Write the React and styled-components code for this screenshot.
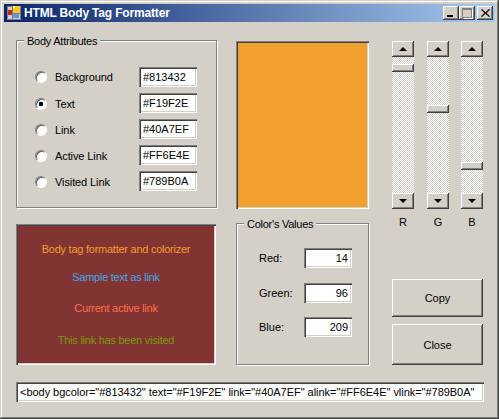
import React from "react";
import styled, { createGlobalStyle, css } from "styled-components";

const attributes = [
  { label: "Background", value: "#813432" },
  { label: "Text", value: "#F19F2E", checked: true },
  { label: "Link", value: "#40A7EF" },
  { label: "Active Link", value: "#FF6E4E" },
  { label: "Visited Link", value: "#789B0A" },
];

const previewLines = [
  { text: "Body tag formatter and colorizer", color: "#f19f2e", top: 0 },
  { text: "Sample text as link", color: "#40a7ef", top: 14 },
  { text: "Current active link", color: "#ff6e4e", top: 17 },
  { text: "This link has been visited", color: "#789b0a", top: 18 },
];

const channels = [
  { name: "R", label: "Red:", value: 14 },
  { name: "G", label: "Green:", value: 96 },
  { name: "B", label: "Blue:", value: 209 },
];

const bodyTag =
  '<body bgcolor="#813432" text="#F19F2E" link="#40A7EF" alink="#FF6E4E" vlink="#789B0A"';

export default function App() {
  return (
    <>
      <GlobalStyle />
      <Window>
        <TitleBar>
          <AppIcon />
          <Title>HTML Body Tag Formatter</Title>
          <Controls>
            <ControlButton>
              <svg width="8" height="8" viewBox="0 0 8 8">
                <rect x="0" y="6" width="6" height="2" fill="#000" />
              </svg>
            </ControlButton>
            <ControlButton>
              <svg width="11" height="11" viewBox="0 0 11 11" fill="none">
                <rect x="0.5" y="0.5" width="9" height="9" stroke="#808080" />
                <rect x="1" y="1" width="8" height="1" fill="#808080" />
                <path d="M10.5 1.5V10.5H1.5" stroke="#fff" />
              </svg>
            </ControlButton>
            <CloseButton>
              <svg width="9" height="8" viewBox="0 0 9 8">
                <path d="M1 0L4.5 3.2L8 0L9 0.8L5.5 4L9 7.2L8 8L4.5 4.8L1 8L0 7.2L3.5 4L0 0.8Z" fill="#000" />
              </svg>
            </CloseButton>
          </Controls>
        </TitleBar>

        <Content>
          <Panels>
            <AttributesGroup>
              <GroupLabel>Body Attributes</GroupLabel>
              {attributes.map((item) => (
                <AttributeRow key={item.label}>
                  <Radio type="radio" name="attr" defaultChecked={item.checked} />
                  <span>{item.label}</span>
                  <Field readOnly value={item.value} />
                </AttributeRow>
              ))}
            </AttributesGroup>

            <Swatch />

            <RightColumn>
              <Sliders>
                {channels.map((c) => (
                  <Slider key={c.name}>
                    <ScrollBar>
                      <ArrowButton>
                        <Arrow />
                      </ArrowButton>
                      <Track>
                        <TrackTexture id={`checker-${c.name}`} />
                        <Thumb style={{ top: Math.round((c.value / 255) * 128) }} />
                      </Track>
                      <ArrowButton>
                        <Arrow $down />
                      </ArrowButton>
                    </ScrollBar>
                    <SliderName>{c.name}</SliderName>
                  </Slider>
                ))}
              </Sliders>
              <Actions>
                <ActionButton $height={38}>Copy</ActionButton>
                <ActionButton $height={41}>Close</ActionButton>
              </Actions>
            </RightColumn>

            <Preview>
              {previewLines.map((line) => (
                <PreviewLine key={line.text} $color={line.color} $top={line.top}>
                  {line.text}
                </PreviewLine>
              ))}
            </Preview>

            <ValuesGroup>
              <GroupLabel>Color's Values</GroupLabel>
              {channels.map((c) => (
                <ValueRow key={c.name}>
                  <span>{c.label}</span>
                  <ValueField readOnly value={c.value} />
                </ValueRow>
              ))}
            </ValuesGroup>
          </Panels>

          <TagField readOnly value={bodyTag} />
        </Content>
      </Window>
    </>
  );
}

function AppIcon() {
  return (
    <IconSvg width="16" height="16" viewBox="0 0 16 16">
      <rect x="1" y="1" width="14" height="14" fill="#d4d0c8" />
      <path d="M1.5 1.5H14.5V14.5H1.5Z M6.5 1.5V14.5 M1.5 5.5H6.5 M6.5 8.5H14.5" fill="none" stroke="#7f7f7f" />
      <rect x="7" y="1" width="7" height="7" fill="#f8c81c" />
      <rect x="7" y="1" width="2" height="2" fill="#fff09a" />
      <rect x="2" y="5" width="4" height="5" fill="#c8281c" />
      <rect x="7" y="9" width="6" height="4" fill="#5c96e8" />
    </IconSvg>
  );
}

// 1px checker of the classic scrollbar track
function TrackTexture({ id }) {
  return (
    <TextureSvg width="22" height="136" shapeRendering="crispEdges">
      <defs>
        <pattern id={id} width="2" height="2" patternUnits="userSpaceOnUse">
          <rect width="2" height="2" fill="#fff" />
          <rect width="1" height="1" fill="#d4d0c8" />
          <rect x="1" y="1" width="1" height="1" fill="#d4d0c8" />
        </pattern>
      </defs>
      <rect width="22" height="136" fill={`url(#${id})`} />
    </TextureSvg>
  );
}

const GlobalStyle = createGlobalStyle`
  html, body {
    margin: 0;
    padding: 0;
    background: #d4d0c8;
  }
  body, input, button {
    font-family: "Liberation Sans", Arial, sans-serif;
    font-size: 11px;
    color: #000;
  }
`;

const raised = css`
  background: #d4d0c8;
  box-shadow:
    inset -1px -1px 0 #404040,
    inset 1px 1px 0 #fff,
    inset -2px -2px 0 #808080;
`;

const sunken = css`
  box-shadow:
    inset 1px 1px 0 #808080,
    inset 2px 2px 0 #404040,
    inset -1px -1px 0 #fff,
    inset -2px -2px 0 #d4d0c8;
`;

const Window = styled.div`
  width: 499px;
  height: 419px;
  box-sizing: border-box;
  padding: 4px;
  background: #d4d0c8;
  box-shadow:
    inset -1px -1px 0 #404040,
    inset 1px 1px 0 #d4d0c8,
    inset -2px -2px 0 #808080,
    inset 2px 2px 0 #fff;
`;

const TitleBar = styled.div`
  height: 18px;
  display: flex;
  align-items: center;
  padding: 0 2px;
  background: linear-gradient(90deg, #0a246a, #a6caf0);
`;

const IconSvg = styled.svg`
  flex: none;
  margin-right: 2px;
`;

const Title = styled.div`
  flex: 1;
  font-weight: bold;
  font-size: 12px;
  letter-spacing: -0.17px;
  color: #fff;
`;

const Controls = styled.div`
  display: flex;
`;

const ControlButton = styled.div`
  ${raised}
  width: 16px;
  height: 14px;
  display: flex;
  align-items: center;
  justify-content: center;
`;

const CloseButton = styled(ControlButton)`
  margin-left: 2px;
`;

const Content = styled.div`
  padding: 19px 7px 0 12px;
`;

const Panels = styled.div`
  display: grid;
  grid-template-columns: 201px 133px 96px;
  grid-template-rows: 168px 141px;
  column-gap: 19px;
  row-gap: 15px;
`;

const Group = styled.div`
  position: relative;
  box-sizing: border-box;
  margin-top: -1px;
  border: 1px solid #808080;
  box-shadow:
    1px 1px 0 #fff,
    inset 1px 1px 0 #fff;
`;

const GroupLabel = styled.div`
  position: absolute;
  top: -6px;
  left: 7px;
  padding: 0 3px;
  background: #d4d0c8;
  line-height: 13px;
  letter-spacing: -0.25px;
`;

const AttributesGroup = styled(Group)`
  height: 168px;
  padding: 26px 19px 0 18px;
  display: flex;
  flex-direction: column;
  gap: 6px;
`;

const Radio = styled.input`
  appearance: none;
  width: 12px;
  height: 12px;
  margin: 0;
  border: 1px solid;
  border-color: #808080 #fff #fff #808080;
  border-radius: 50%;
  background: #fff;
  box-shadow: inset 1px 1px 0 #606060;

  &:checked {
    background: radial-gradient(circle at 50% 50%, #000 0 2px, #fff 2.6px);
  }
`;

const AttributeRow = styled.label`
  display: grid;
  grid-template-columns: 13px 1fr 58px;
  column-gap: 7px;
  align-items: center;
  letter-spacing: -0.1px;

  &:not(:first-of-type) > span,
  &:not(:first-of-type) > ${Radio} {
    margin-top: 2px;
  }
`;

const Field = styled.input`
  ${sunken}
  box-sizing: border-box;
  width: 58px;
  height: 20px;
  margin: 0;
  padding: 0 4px;
  border: none;
  outline: none;
  background: #fff;
`;

const Swatch = styled.div`
  ${sunken}
  background: #f19f2e;
  height: 168px;
`;

const RightColumn = styled.div`
  grid-row: 1 / span 2;
  grid-column: 3;
  padding-left: 4px;
  display: flex;
  flex-direction: column;
  justify-content: space-between;
`;

const Sliders = styled.div`
  display: grid;
  grid-template-columns: 35px 34px 22px;
`;

const Slider = styled.div`
  width: 22px;
  display: flex;
  flex-direction: column;
  align-items: center;
`;

const ScrollBar = styled.div`
  width: 22px;
  height: 168px;
  display: flex;
  flex-direction: column;
`;

const ArrowButton = styled.div`
  ${raised}
  height: 16px;
  flex: none;
  display: flex;
  align-items: center;
  justify-content: center;
`;

const Arrow = styled.div`
  width: 0;
  height: 0;
  border-left: 4px solid transparent;
  border-right: 4px solid transparent;
  ${(p) =>
    p.$down
      ? "border-top: 4px solid #000;"
      : "border-bottom: 4px solid #000;"}
`;

const Track = styled.div`
  position: relative;
  flex: 1;
  overflow: hidden;
`;

const TextureSvg = styled.svg`
  display: block;
`;

const Thumb = styled.div`
  ${raised}
  position: absolute;
  left: 0;
  right: 0;
  height: 8px;
`;

const SliderName = styled.div`
  margin-top: 6px;
  line-height: 14px;
`;

const Actions = styled.div`
  display: flex;
  flex-direction: column;
  gap: 7px;
`;

const ActionButton = styled.button`
  ${raised}
  height: ${(p) => p.$height}px;
  width: 91px;
  padding: 0;
  border: none;
`;

const Preview = styled.div`
  ${sunken}
  box-sizing: border-box;
  width: 200px;
  height: 141px;
  padding-top: 18px;
  background: #813432;
  display: flex;
  flex-direction: column;
  align-items: center;
`;

const PreviewLine = styled.div`
  margin-top: ${(p) => p.$top}px;
  line-height: 14px;
  letter-spacing: -0.25px;
  color: ${(p) => p.$color};
`;

const ValuesGroup = styled(Group)`
  height: 142px;
  padding: 24px 16px 0 22px;
  display: flex;
  flex-direction: column;
  gap: 14.5px;
`;

const ValueRow = styled.div`
  display: grid;
  grid-template-columns: 45px 48px;
  align-items: center;

  &:first-of-type {
    margin-left: -1px;
  }
`;

const ValueField = styled(Field)`
  width: 48px;
  text-align: right;
`;

const TagField = styled(Field)`
  display: block;
  width: 468px;
  margin-top: 17px;
  letter-spacing: -0.035px;
`;
